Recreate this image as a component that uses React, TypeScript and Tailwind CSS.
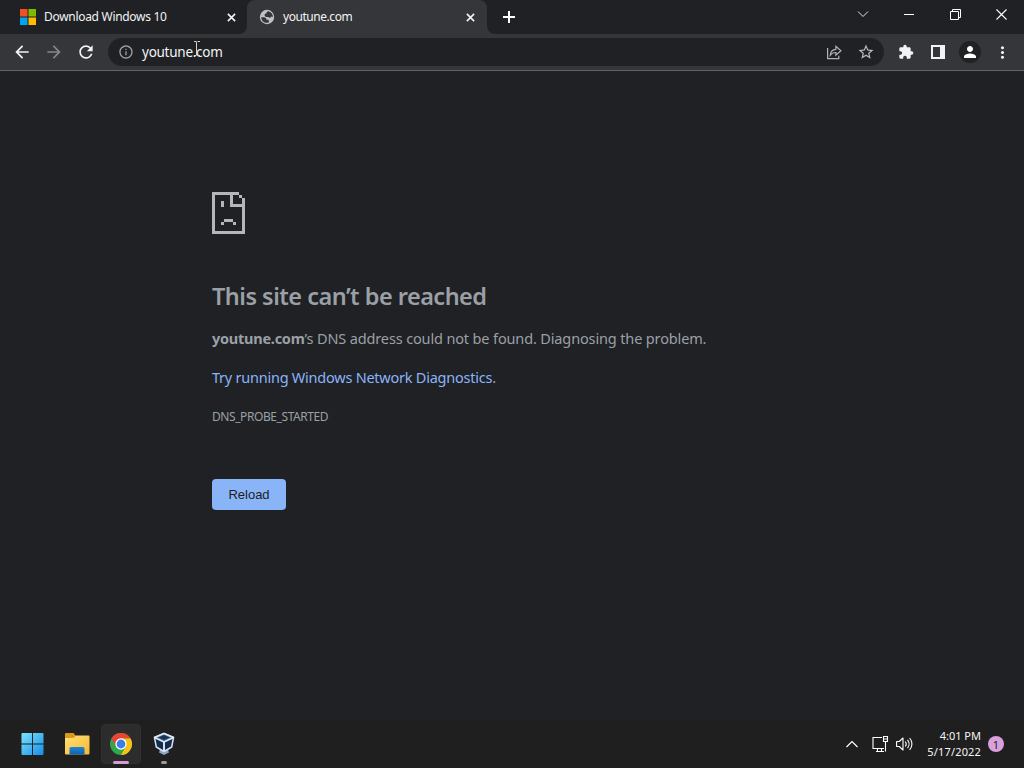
import React from "react";
import {
  MdArrowBack,
  MdArrowForward,
  MdRefresh,
  MdInfoOutline,
  MdStarBorder,
  MdExtension,
  MdPerson,
  MdMoreVert,
} from "react-icons/md";

function MicrosoftLogo() {
  return (
    <svg className="h-4 w-4 shrink-0" viewBox="0 0 16 16">
      <path fill="#f25022" d="M0 0h7.5v7.5H0z" />
      <path fill="#7fba00" d="M8.5 0H16v7.5H8.5z" />
      <path fill="#00a4ef" d="M0 8.5h7.5V16H0z" />
      <path fill="#ffb900" d="M8.5 8.5H16V16H8.5z" />
    </svg>
  );
}

function GlobeIcon() {
  return (
    <svg className="h-4 w-4 shrink-0" viewBox="0 0 16 16">
      <circle cx="8" cy="8" r="7.2" fill="#bdc1c6" />
      <path
        fill="#35363a"
        d="M9.200 2.300c-1.200.400-1.700 1-1.700 1.900-1.300.200-1.900.900-1.900 2 0 1 .800 1.700 1.900 1.700h1.800c.500 0 .700.800 1.400.800 1.400 0 1.200-1.200 2.100-1.200.500 0 .7.400 1.200.4-.1-2.800-2-5-4.800-5.600zM2.200 8.200h2.600c1.800 0 2.700.800 2.700 2.600h1.700c.4 0 .6.300.6.700v2c-.6.200-1.200.300-1.800.300-3.200 0-5.700-2.500-5.800-5.600z"
      />
    </svg>
  );
}

function Cross({ className }: { className: string }) {
  return (
    <svg className={className} viewBox="0 0 10 10" fill="none" stroke="#f1f3f4" strokeWidth="1.8">
      <path d="M1 1l8 8M9 1L1 9" />
    </svg>
  );
}

function TabStrip() {
  return (
    <div className="relative flex h-[34px] bg-[#202124] text-[12px] leading-4 text-[#f1f3f4]">
      <div className="flex w-[247px] items-center pr-[11px] pl-5">
        <MicrosoftLogo />
        <span className="ml-2 tracking-[-0.3px] whitespace-nowrap">Download Windows 10</span>
        <Cross className="ml-auto h-[9px] w-[9px]" />
      </div>
      <div className="relative flex w-[240px] items-center rounded-t-lg bg-[#35363a] px-3">
        <svg className="absolute bottom-0 -left-2 h-2 w-2" viewBox="0 0 8 8">
          <path d="M8 0v8H0a8 8 0 0 0 8-8z" fill="#35363a" />
        </svg>
        <svg className="absolute -right-2 bottom-0 h-2 w-2" viewBox="0 0 8 8">
          <path d="M0 0v8h8a8 8 0 0 1-8-8z" fill="#35363a" />
        </svg>
        <GlobeIcon />
        <span className="ml-2 tracking-[-0.45px] whitespace-nowrap">youtune.com</span>
        <Cross className="ml-auto h-[9px] w-[9px]" />
      </div>
      <svg className="mt-[11px] ml-4 h-3 w-3" viewBox="0 0 12 12" stroke="#fff" strokeWidth="2">
        <path d="M6 0v12M0 6h12" />
      </svg>
      <div className="ml-auto flex h-[28px] items-center">
        <svg className="mr-[35px] h-3 w-3" viewBox="0 0 12 12" fill="none" stroke="#e0e1e3">
          <path d="M1 3.500l5 5 5-5" />
        </svg>
        <svg className="mr-9 h-[10px] w-[10px]" viewBox="0 0 10 10" stroke="#fff">
          <path d="M0 5.500h10" />
        </svg>
        <svg className="mr-[35px] h-[11px] w-[11px]" viewBox="0 0 11 11" fill="none" stroke="#fff">
          <path d="M.5 2.500h8v8h-8zM2.500 2.500v-2h8v8h-2" />
        </svg>
        <svg className="mr-[17px] h-[11px] w-[11px]" viewBox="0 0 11 11" stroke="#fff" strokeWidth="1.100">
          <path d="M.5.500l10 10M10.500.500l-10 10" />
        </svg>
      </div>
    </div>
  );
}

function Toolbar() {
  return (
    <div className="flex h-[37px] items-center border-b border-[#626467] bg-[#35363a] pl-3 text-[#f1f3f4]">
      <MdArrowBack className="h-5 w-5" />
      <MdArrowForward className="ml-3 h-5 w-5 text-[#85868a]" />
      <MdRefresh className="ml-3 h-5 w-5" />
      <div className="relative ml-3 flex h-7 w-[776px] items-center rounded-full bg-[#202124] pl-[10px]">
        <MdInfoOutline className="h-4 w-4 text-[#9aa0a6]" />
        <span className="ml-2 text-[13.5px] leading-5 tracking-[-0.26px]">youtune.com</span>
        <svg className="absolute top-[3px] left-[85px] h-4 w-2" viewBox="0 0 8 16" fill="none" stroke="#d8d4bd">
          <path d="M1 .5h2.500M4.500.500H7M3.500 1v13M1 14.500h2.500M4.500 14.500H7" />
        </svg>
        <svg className="ml-auto h-4 w-4" viewBox="0 0 16 16" fill="none" stroke="#b0b4b9" strokeWidth="1.200">
          <path d="M1.600 4v10.600h11.200v-2.800" />
          <path d="M4.300 11.200c.2-3.600 2-5.700 5.600-5.900V2.300L14.900 6.800l-5 4.400V8.500c-2.700 0-4.200.800-5.600 2.700z" />
        </svg>
        <MdStarBorder className="mr-[9px] ml-[15px] h-[18px] w-[18px] text-[#b8bcc1]" />
      </div>
      <MdExtension className="ml-[14px] h-4 w-4" />
      <svg className="ml-[17px] h-[14px] w-[14px]" viewBox="0 0 14 14">
        <path fill="#f1f3f4" d="M0 0h14v14H0z" />
        <path fill="#35363a" d="M2 2h7v10H2z" />
      </svg>
      <div className="ml-[14px] flex h-[22px] w-[22px] items-center justify-center rounded-full bg-[#202124]">
        <MdPerson className="h-[18px] w-[18px] text-white" />
      </div>
      <MdMoreVert className="ml-[12px] h-[19px] w-[19px]" />
    </div>
  );
}

function SadFile() {
  return (
    <svg className="h-[42px] w-[33px]" viewBox="0 0 11 14" fill="#b5b6b7" shapeRendering="crispEdges">
      <path d="M0 0h9v1H7v3h3V2h1v12H0zM1 1v12h9V5H6V1z" fillRule="evenodd" />
      <path d="M9 1h1v1H9zM3 3h1v2H3zM4 9h3v1H4zM3 10h1v1H3zM7 10h1v1H7z" />
    </svg>
  );
}

function ErrorPage() {
  return (
    <main className="flex h-[649px] flex-col items-start bg-[#202124] pt-[121px] pl-[212px] text-[#9aa0a6]">
      <SadFile />
      <h1 className="mt-[46px] h-8 text-[23.5px] leading-8 font-semibold tracking-[-0.52px] whitespace-nowrap">
        This site can’t be reached
      </h1>
      <p className="mt-[16px] h-5 text-[14.5px] leading-5 tracking-[-0.14px] whitespace-nowrap">
        <strong className="tracking-[-0.25px]">youtune.com</strong>’s DNS address could not be found. Diagnosing the
        problem.
      </p>
      <p className="mt-[19px] h-5 text-[14.5px] leading-5 tracking-[-0.24px] whitespace-nowrap">
        <a className="text-[#8ab4f8]">Try running Windows Network Diagnostics</a>.
      </p>
      <p className="mt-[22px] h-4 text-[12px] leading-4 tracking-[-0.42px]">DNS_PROBE_STARTED</p>
      <button className="mt-[54px] h-[31px] w-[74px] rounded bg-[#8ab4f8] font-['Liberation_Sans',sans-serif] text-[13px] leading-none text-[#202124]">
        Reload
      </button>
    </main>
  );
}

function StartIcon() {
  return (
    <svg className="h-6 w-6" viewBox="0 0 24 24">
      <defs>
        <linearGradient id="start" x1="0" y1="0" x2="1" y2="1">
          <stop offset="0" stopColor="#7be3fc" />
          <stop offset="1" stopColor="#168ee8" />
        </linearGradient>
      </defs>
      <path
        fill="url(#start)"
        d="M1.500.500h10v11H.500v-10a1 1 0 0 1 1-1zM12.500.500h10a1 1 0 0 1 1 1v10h-11zM.500 12.500h11v11h-10a1 1 0 0 1-1-1zM12.500 12.500h11v10a1 1 0 0 1-1 1h-10z"
      />
    </svg>
  );
}

function FolderIcon() {
  return (
    <svg className="h-6 w-[26px]" viewBox="0 0 26 24">
      <defs>
        <linearGradient id="folder" x1="0" y1="0" x2="1" y2="1">
          <stop offset="0" stopColor="#ffe07a" />
          <stop offset="1" stopColor="#f5b92e" />
        </linearGradient>
        <linearGradient id="tray" x1="0" y1="0" x2="0" y2="1">
          <stop offset="0" stopColor="#1c86d8" />
          <stop offset="1" stopColor="#1262a8" />
        </linearGradient>
      </defs>
      <path fill="#d99a18" d="M1 2a1 1 0 0 1 1-1h7.500l2.500 3v4H1z" />
      <path fill="url(#folder)" d="M1 6h8.500L12 3.500h12.500a1 1 0 0 1 1 1V21.500a1 1 0 0 1-1 1H2a1 1 0 0 1-1-1z" />
      <path fill="url(#tray)" d="M5.500 22.500v-6a1.500 1.500 0 0 1 1.500-1.500h12a1.500 1.500 0 0 1 1.500 1.500v6z" />
    </svg>
  );
}

function ChromeIcon() {
  return (
    <svg className="h-6 w-6" viewBox="0 0 24 24">
      <circle cx="12" cy="12" r="11" fill="#31a64b" />
      <path fill="#ea4335" d="M2.470 6.500A11 11 0 0 1 21.530 6.500H12L7.240 14.750z" />
      <path fill="#fbc116" d="M21.530 6.500A11 11 0 0 1 12 23l4.760-8.250L12 6.500z" />
      <circle cx="12" cy="12" r="5.700" fill="#fff" />
      <circle cx="12" cy="12" r="4.400" fill="#3b7de9" />
    </svg>
  );
}

function BoxIcon() {
  return (
    <svg className="h-6 w-6" viewBox="0 0 24 24">
      <path fill="#8ea3c1" d="M8.500 16h7l1.500 4.500-5 2.500-5-2.500z" />
      <path
        fill="#152b4e"
        stroke="#d4e1f1"
        strokeWidth="1.500"
        strokeLinejoin="round"
        d="M12 1.500l9.500 4-1.800 9.500L12 19.500 4.300 15 2.500 5.500z"
      />
      <path
        fill="#47698f"
        stroke="#e2ebf6"
        strokeWidth="1.500"
        strokeLinejoin="round"
        d="M2.500 5.500L12 1.500l9.500 4L12 10z"
      />
      <path stroke="#d4e1f1" strokeWidth="2" d="M12 10v9.500" />
      <path fill="#1a3156" d="M6.500 5.500l5.500-2.300 5.500 2.300L12 8z" />
    </svg>
  );
}

function Taskbar() {
  return (
    <footer className="flex h-12 items-center bg-[#1f1f1f] text-[#f5f5f5]">
      <div className="ml-[21px] flex w-[23px] items-center justify-center">
        <StartIcon />
      </div>
      <div className="ml-5">
        <FolderIcon />
      </div>
      <div className="relative ml-[11px] flex h-10 w-10 items-center justify-center rounded border border-[#303030] bg-[#2c2c2c]">
        <ChromeIcon />
        <span className="absolute -bottom-px h-[3px] w-4 rounded-full bg-[#d59bd7]" />
      </div>
      <div className="relative ml-[3px] flex h-10 w-10 items-center justify-center">
        <BoxIcon />
        <span className="absolute bottom-0 h-[3px] w-[6px] rounded-full bg-[#9a9a9a]" />
      </div>
      <svg className="ml-auto h-3 w-3" viewBox="0 0 12 12" fill="none" stroke="#fff" strokeWidth="1.200">
        <path d="M.5 9L6 3.500 11.500 9" />
      </svg>
      <svg className="ml-[14px] h-4 w-[17px]" viewBox="0 0 17 16" fill="none" stroke="#fff" strokeWidth="1.100">
        <path d="M10 1.500H1v11h11M4 15.500h8M5.500 12.500v3M9.500 12.500v3M11.500.500h4v5h-4zM13.500 5.500v10M12 3h3" />
      </svg>
      <svg
        className="ml-[7px] h-4 w-[17px]"
        viewBox="0 0 17 16"
        fill="none"
        stroke="#fff"
        strokeWidth="1.100"
        strokeLinejoin="round"
      >
        <path d="M.6 5.500h2.600L7 2v12l-3.800-3.500H.6zM9.300 5.500c1.100 1.500 1.100 3.500 0 5M11.500 3.800c2 2.400 2 6 0 8.400M13.600 2c3.100 3.500 3.100 8.500 0 12" />
      </svg>
      <div className="ml-[10px] flex w-[58px] flex-col items-end text-[11px] leading-4 whitespace-nowrap">
        <span>4:01 PM</span>
        <span className="tracking-[0.16px]">5/17/2022</span>
      </div>
      <div className="mr-5 ml-[7px] flex h-4 w-4 items-center justify-center rounded-full bg-[#d8a0dc] text-[11px] leading-none text-[#202020]">
        1
      </div>
    </footer>
  );
}

export default function App() {
  return (
    <div className="h-[768px] w-[1024px] overflow-hidden bg-[#202124] font-['Noto_Sans','Open_Sans',sans-serif]">
      <TabStrip />
      <Toolbar />
      <ErrorPage />
      <Taskbar />
    </div>
  );
}
